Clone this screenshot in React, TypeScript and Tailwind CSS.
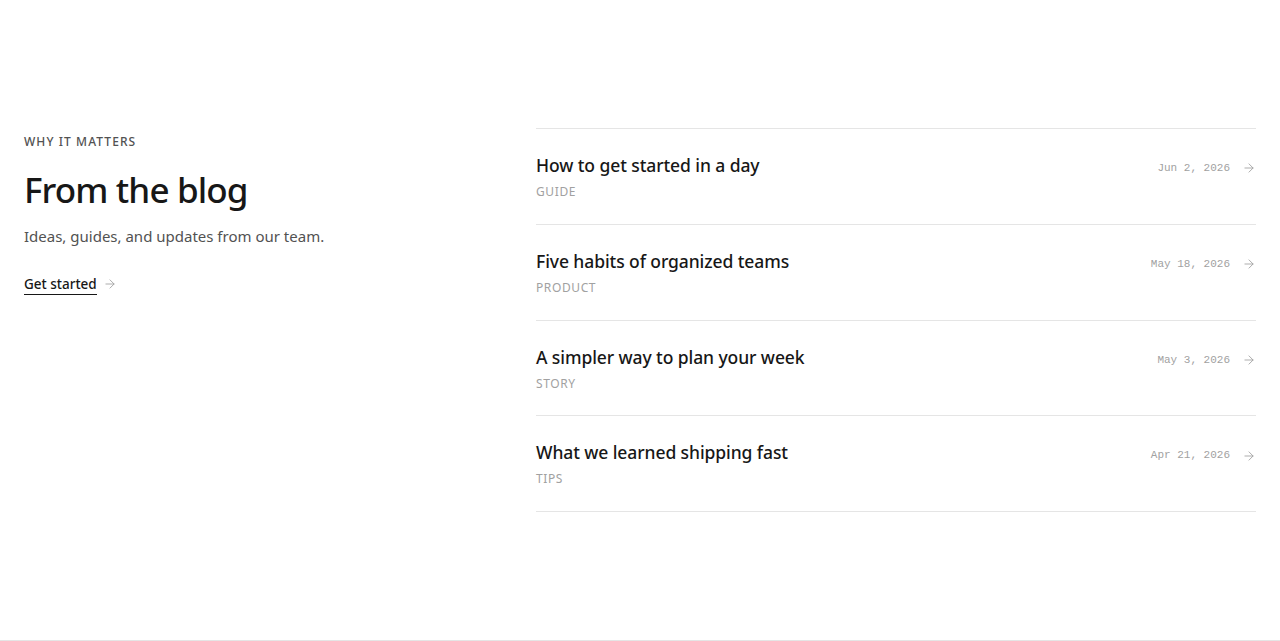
import { ArrowRight } from 'lucide-react';

const posts = [
  { title: 'How to get started in a day', tag: 'Guide', date: 'Jun 2, 2026' },
  { title: 'Five habits of organized teams', tag: 'Product', date: 'May 18, 2026' },
  { title: 'A simpler way to plan your week', tag: 'Story', date: 'May 3, 2026' },
  { title: 'What we learned shipping fast', tag: 'Tips', date: 'Apr 21, 2026' },
];

export default function App() {
  return (
    <div className="min-h-screen bg-white font-['Noto_Sans',sans-serif] text-neutral-900">
      <section className="border-b border-neutral-200 py-32">
        <div className="grid grid-cols-5 gap-12 px-6">
          <div className="col-span-2">
            <p className="pt-1.5 text-xs font-medium uppercase tracking-[0.09em] text-neutral-600">
              Why it matters
            </p>
            <h2 className="mt-5 text-[35px] font-medium leading-10 tracking-tight text-neutral-900">
              From the blog
            </h2>
            <p className="mt-[15px] text-[15px] text-neutral-600">Ideas, guides, and updates from our team.</p>
            <a href="#" className="mt-[26px] inline-flex items-center gap-1.5 text-[13.5px] font-medium text-neutral-900">
              <span className="border-b border-neutral-900 leading-5">Get started</span>
              <ArrowRight className="h-3.5 w-3.5 text-neutral-400" strokeWidth={1.5} />
            </a>
          </div>
          <div className="col-span-3 border-t border-neutral-200">
            {posts.map((p) => (
              <a
                key={p.title}
                href="#"
                className="flex items-start justify-between border-b border-neutral-200 pt-[22px] pb-[23.75px]"
              >
                <div>
                  <h3 className="text-[17.5px] font-medium leading-7 tracking-[-0.005em] text-neutral-900">
                    {p.title}
                  </h3>
                  <p className="mt-[5px] text-xs uppercase tracking-wider text-neutral-400">{p.tag}</p>
                </div>
                <div className="flex items-center gap-3 pt-[9px]">
                  <span className="font-['Liberation_Mono',monospace] text-[11px] text-neutral-400">{p.date}</span>
                  <ArrowRight className="h-3.5 w-3.5 text-neutral-400" strokeWidth={1.5} />
                </div>
              </a>
            ))}
          </div>
        </div>
      </section>
    </div>
  );
}
